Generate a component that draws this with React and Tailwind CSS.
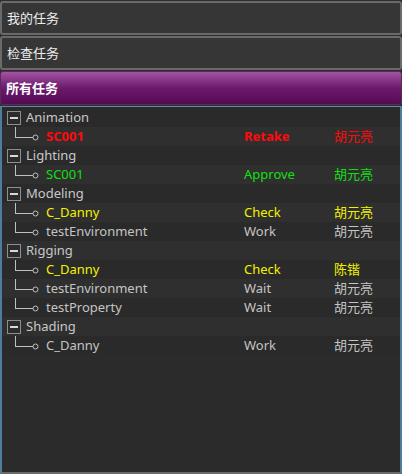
import React from 'react';

const groups = [
  {
    name: 'Animation',
    items: [{ name: 'SC001', status: 'Retake', user: '胡元亮', tone: 'red' }],
  },
  {
    name: 'Lighting',
    items: [{ name: 'SC001', status: 'Approve', user: '胡元亮', tone: 'green' }],
  },
  {
    name: 'Modeling',
    items: [
      { name: 'C_Danny', status: 'Check', user: '胡元亮', tone: 'yellow' },
      { name: 'testEnvironment', status: 'Work', user: '胡元亮', tone: 'plain' },
    ],
  },
  {
    name: 'Rigging',
    items: [
      { name: 'C_Danny', status: 'Check', user: '陈锴', tone: 'yellow' },
      { name: 'testEnvironment', status: 'Wait', user: '胡元亮', tone: 'plain' },
      { name: 'testProperty', status: 'Wait', user: '胡元亮', tone: 'plain' },
    ],
  },
  {
    name: 'Shading',
    items: [{ name: 'C_Danny', status: 'Work', user: '胡元亮', tone: 'plain' }],
  },
];

const tones = {
  red: 'text-[#ff0a0a] font-bold',
  green: 'text-[#10e010]',
  yellow: 'text-[#f2f200]',
  plain: 'text-[#c4c4c4]',
};

function Tab({ label, active }) {
  if (active) {
    return (
      <div className="h-[34px] flex items-center px-[5px] rounded-[3px] border border-[#5a2a5a] bg-gradient-to-b from-[#a452a4] via-[#6c1a6c] to-[#540a54] text-white font-bold">
        {label}
      </div>
    );
  }
  return (
    <div className="h-[34px] flex items-center px-[5px] rounded-[3px] border-2 border-[#6a6a6a] bg-[#363636] text-[#ececec]">
      {label}
    </div>
  );
}

function ExpandBox() {
  return (
    <svg width="14" height="14" viewBox="0 0 14 14" className="shrink-0">
      <rect x="0.5" y="0.5" width="13" height="13" fill="#2c2c2c" stroke="#8e8e8e" />
      <line x1="3" y1="7" x2="11" y2="7" stroke="#d8d8d8" strokeWidth="2" />
    </svg>
  );
}

function Branch() {
  return (
    <svg width="40" height="19" viewBox="0 0 40 19" className="shrink-0">
      <line x1="13.5" y1="0" x2="13.5" y2="10" stroke="#c0c0c0" />
      <line x1="13" y1="10.5" x2="31" y2="10.5" stroke="#c0c0c0" />
      <circle cx="33.5" cy="10.5" r="2.5" fill="#2c2c2c" stroke="#c0c0c0" />
    </svg>
  );
}

export default function App() {
  let idx = 0;
  const rows = [];
  groups.forEach((g) => {
    const bg = idx++ % 2 === 0 ? 'bg-[#2a2a2a]' : 'bg-[#2f2f2f]';
    rows.push(
      <div key={g.name} className={`h-[19px] flex items-center ${bg}`}>
        <div className="w-[24px] pl-[5px] flex items-center">
          <ExpandBox />
        </div>
        <span className="text-[#c8c8c8]">{g.name}</span>
      </div>
    );
    g.items.forEach((it, i) => {
      const rbg = idx++ % 2 === 0 ? 'bg-[#2a2a2a]' : 'bg-[#2f2f2f]';
      const t = tones[it.tone];
      rows.push(
        <div key={g.name + i} className={`h-[19px] flex items-center ${rbg}`}>
          <div className="w-[44px] flex">
            <Branch />
          </div>
          <span className={`w-[198px] ${t}`}>{it.name}</span>
          <span className={`w-[90px] ${t}`}>{it.status}</span>
          <span className={it.tone === 'red' ? 'text-[#ff0a0a]' : t}>{it.user}</span>
        </div>
      );
    });
  });

  return (
    <div
      className="w-[402px] h-[474px] bg-[#2e2e2e] flex flex-col gap-[1px] pt-[1px] text-[13px] leading-[19px]"
      style={{ fontFamily: '"Noto Sans", "Noto Sans CJK SC", sans-serif' }}
    >
      <Tab label="我的任务" />
      <Tab label="检查任务" />
      <Tab label="所有任务" active />
      <div className="flex-1 border-x-2 border-t border-b-2 border-x-[#4f7e9c] border-t-[#5c8aa6] border-b-[#6a6a6a] bg-[#2b2b2b] pt-[1px]">
        {rows}
      </div>
    </div>
  );
}
